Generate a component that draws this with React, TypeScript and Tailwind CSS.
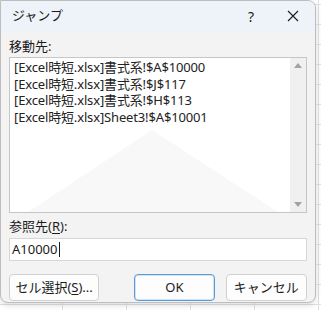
const targets = [
  '[Excel時短.xlsx]書式系!$A$10000',
  '[Excel時短.xlsx]書式系!$J$117',
  '[Excel時短.xlsx]書式系!$H$113',
  '[Excel時短.xlsx]Sheet3!$A$10001',
]

const FONT = "font-['Noto_Sans','Noto_Sans_CJK_JP',sans-serif]"

export default function App() {
  return (
    <div
      className={`w-[321px] h-[310px] bg-white overflow-hidden ${FONT}`}
      style={{
        backgroundImage:
          'linear-gradient(#e1e1e1 1px, transparent 1px), linear-gradient(90deg, #e1e1e1 1px, transparent 1px)',
        backgroundSize: '64px 20px',
        backgroundPosition: '-2px 4px',
      }}
    >
      {/* Dialog */}
      <div className="w-[316px] h-[303px] flex flex-col bg-[#f3f3f3] border border-[#bdbdbd] rounded-b-lg rounded-tr-lg overflow-hidden shadow-[0_2px_6px_rgba(0,0,0,0.15)]">

        {/* Title bar */}
        <div className="h-[30px] shrink-0 flex items-center bg-[#eef3f9] text-[13px] text-[#1b1b1b]">
          <span className="pl-[11px] flex-1">ジャンプ</span>
          <span className="w-[20px] text-center mr-[26px] text-[14px]">?</span>
          <svg width="12" height="12" viewBox="0 0 12 12" className="mr-[16px]">
            <path d="M1 1 L11 11 M11 1 L1 11" stroke="#1b1b1b" strokeWidth="1.1" />
          </svg>
        </div>

        {/* Body */}
        <div className="flex-1 flex flex-col px-[8px] text-[13px] text-[#1b1b1b]">
          <div className="mt-[6px] h-[19px] leading-[19px]">移動先:</div>

          {/* List box */}
          <div className="relative mt-[1px] h-[156px] flex bg-white border border-[#c6c6c6]">
            <svg className="absolute left-0 top-0 pointer-events-none" width="288" height="154">
              <polygon points="18,154 142,72 268,154" fill="#f8f8f8" />
            </svg>
            <div className="relative flex-1 pt-[1px] pl-[4px] leading-[16.7px] text-[13px] tracking-[-0.15px] text-[#222]">
              {targets.map((t) => (
                <div key={t} className="whitespace-nowrap">{t}</div>
              ))}
            </div>
            <div className="w-[16px] flex flex-col justify-between items-center bg-[#f0f0f0] py-[5px]">
              <svg width="8" height="5" viewBox="0 0 8 5">
                <polygon points="0,5 4,0 8,5" fill="#a3a3a3" />
              </svg>
              <svg width="8" height="5" viewBox="0 0 8 5">
                <polygon points="0,0 8,0 4,5" fill="#a3a3a3" />
              </svg>
            </div>
          </div>

          <div className="mt-[4px] h-[19px] leading-[19px]">
            参照先(<span className="underline underline-offset-2">R</span>):
          </div>

          {/* Input */}
          <div className="mt-[2px] h-[23px] flex items-center bg-white border border-[#d6d6d6] pl-[2px] text-[13px] text-[#1b1b1b]">
            A10000
            <span className="ml-[1px] w-px h-[15px] bg-[#1b1b1b]" />
          </div>

          {/* Buttons */}
          <div className="mt-[13px] flex items-center text-[13px]">
            <button className="w-[92px] h-[27px] bg-[#fdfdfd] border border-[#d0d0d0] rounded-[4px]">
              セル選択(<span className="underline underline-offset-2">S</span>)...
            </button>
            <button className="ml-[35px] w-[82px] h-[27px] bg-[#fdfdfd] border border-[#5b9bd5] rounded-[4px] shadow-[inset_0_0_0_1px_#cfe3f5]">
              OK
            </button>
            <button className="ml-[11px] w-[83px] h-[27px] bg-[#fdfdfd] border border-[#d0d0d0] rounded-[4px]">
              キャンセル
            </button>
          </div>
        </div>
      </div>
    </div>
  )
}
